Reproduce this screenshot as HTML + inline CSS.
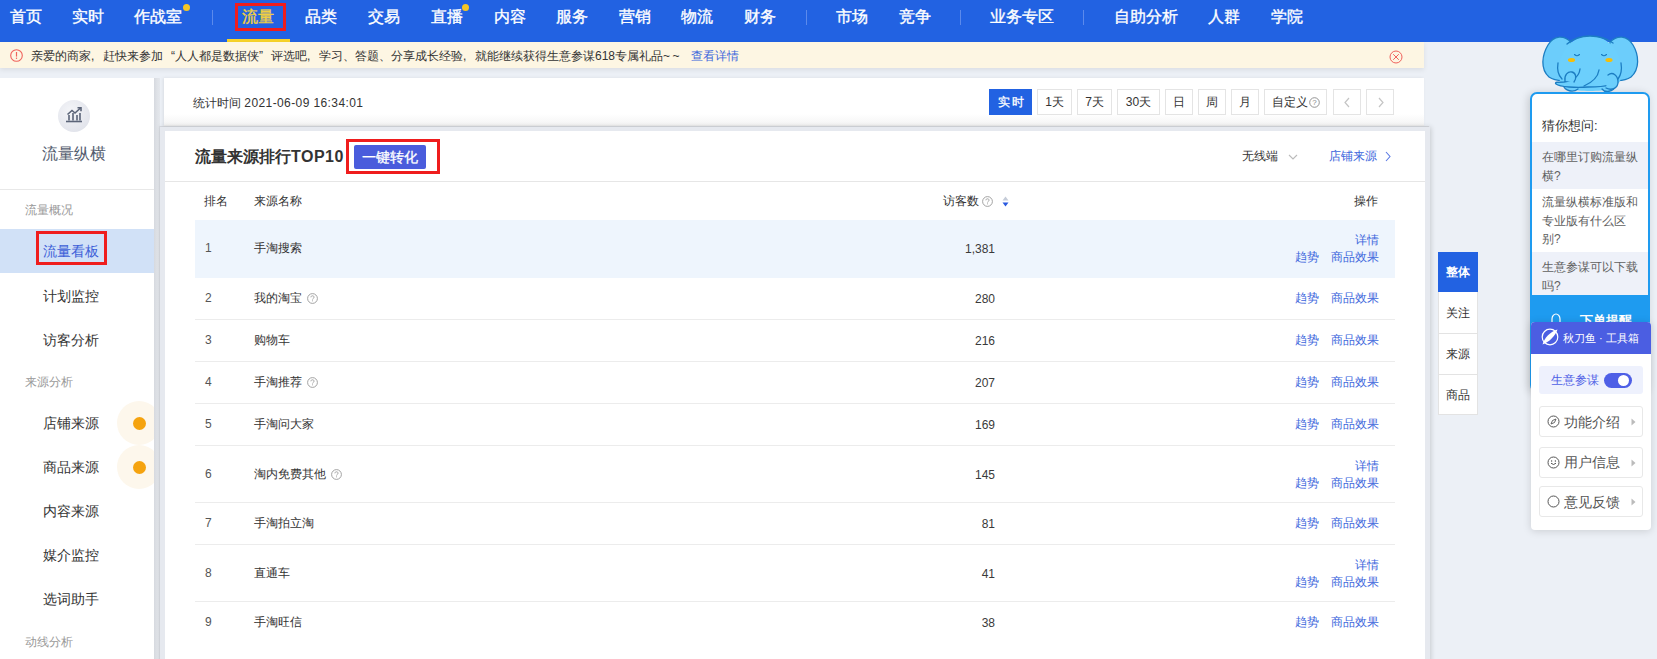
<!DOCTYPE html>
<html><head><meta charset="utf-8">
<style>
*{margin:0;padding:0;box-sizing:border-box;}
html,body{width:1657px;height:659px;overflow:hidden;}
body{background:#ecf0f6;font-family:"Liberation Sans",sans-serif;color:#333;position:relative;}
.abs{position:absolute;}
.nav{position:absolute;left:0;top:0;width:1657px;height:42px;background:#2262e2;}
.nav span{position:absolute;top:6px;font-size:16px;line-height:22px;color:#fff;white-space:nowrap;-webkit-text-stroke-width:0.35px;}
.nav .sep{position:absolute;top:10px;width:1px;height:15px;background:#5c8aec;}
.nav .dot{position:absolute;width:7px;height:7px;border-radius:50%;background:#f6c624;}
.notice{position:absolute;left:0;top:42px;width:1424px;height:26px;background:#fdf6e3;box-shadow:0 2px 5px rgba(0,0,0,0.08);font-size:12px;color:#333;}
.side{position:absolute;left:0;top:78px;width:154px;height:581px;background:#fff;}
.side .t{position:absolute;white-space:nowrap;}
.topcard{position:absolute;left:164px;top:78px;width:1260px;height:48px;background:linear-gradient(180deg,#fff 0,#fff 36px,#f4f4f4 47px,#e8e8e8 48px);box-shadow:-1px 0 3px rgba(0,0,0,0.08);}
.btn{position:absolute;top:11px;height:26px;border:1px solid #e4e4e4;background:#fff;font-size:12px;line-height:24px;text-align:center;color:#333;}
.main{position:absolute;left:160px;top:127px;width:1270px;height:560px;background:#fff;border:5px solid #e6e9ef;border-top-width:4px;box-shadow:1px 0 5px rgba(0,0,0,0.16),-1px -1px 0 #d9dce2;}
.row{position:absolute;left:32px;width:1200px;border-top:1px solid #ebebeb;}
.c{position:absolute;font-size:12px;white-space:nowrap;line-height:14px;}
.lnk{color:#3c66dc;}
</style></head><body>

<div class="nav">
  <span style="left:10px">首页</span>
  <span style="left:72px">实时</span>
  <span style="left:134px">作战室</span><i class="dot" style="left:183px;top:4px"></i>
  <i class="sep" style="left:212px"></i>
  <span style="left:242px;color:#f6d23c">流量</span>
  <span style="left:305px">品类</span>
  <span style="left:368px">交易</span>
  <span style="left:431px">直播</span><i class="dot" style="left:462px;top:4px"></i>
  <span style="left:494px">内容</span>
  <span style="left:556px">服务</span>
  <span style="left:619px">营销</span>
  <span style="left:681px">物流</span>
  <span style="left:744px">财务</span>
  <i class="sep" style="left:806px"></i>
  <span style="left:836px">市场</span>
  <span style="left:899px">竞争</span>
  <i class="sep" style="left:960px"></i>
  <span style="left:990px">业务专区</span>
  <i class="sep" style="left:1083px"></i>
  <span style="left:1114px">自助分析</span>
  <span style="left:1208px">人群</span>
  <span style="left:1271px">学院</span>
</div>


<div class="nav-hl abs" style="left:235px;top:3px;width:51px;height:28px;border:3px solid #ef1d1d;"></div>
<div class="abs" style="left:227px;top:39px;width:63px;height:3px;background:#f7d32a;"></div>

<div class="notice">
  <svg class="abs" style="left:10px;top:7px" width="13" height="13" viewBox="0 0 13 13"><circle cx="6.5" cy="6.5" r="5.8" fill="none" stroke="#f0625c" stroke-width="1.1"/><rect x="5.9" y="3" width="1.2" height="4.6" fill="#f0625c"/><rect x="5.9" y="8.6" width="1.2" height="1.3" fill="#f0625c"/></svg>
  <span class="abs" style="left:31px;top:7px;line-height:14px;white-space:nowrap">亲爱的商家<span style="display:inline-block;width:12px;text-align:left">,</span>赶快来参加<span style="display:inline-block;width:12px;text-align:right">“</span>人人都是数据侠<span style="display:inline-block;width:12px;text-align:left">”</span>评选吧<span style="display:inline-block;width:12px;text-align:left">,</span>学习、答题、分享成长经验<span style="display:inline-block;width:12px;text-align:left">,</span>就能继续获得生意参谋618专属礼品<span style="letter-spacing:2.5px">~~</span></span>
  <span class="abs lnk" style="left:691px;top:7px;line-height:14px;white-space:nowrap">查看详情</span>
  <svg class="abs" style="left:1389px;top:8px" width="14" height="14" viewBox="0 0 14 14"><circle cx="7" cy="7" r="6" fill="none" stroke="#f0625c" stroke-width="1"/><path d="M4.2 4.2L9.8 9.8M9.8 4.2L4.2 9.8" stroke="#f0625c" stroke-width="1"/></svg>
</div>

<!-- sidebar -->
<div class="side">
  <div class="abs" style="left:58px;top:22px;width:32px;height:32px;border-radius:50%;background:radial-gradient(circle at 40% 35%,#f4f5f8 0%,#e3e5ec 70%,#d6d9e2 100%);"></div>
  <svg class="abs" style="left:64px;top:27px" width="20" height="20" viewBox="0 0 20 20"><path d="M2 16.5H18" stroke="#5b6478" stroke-width="1.6"/><path d="M5 15.5V10M9 15.5V8M13 15.5V10M16 15.5V8" stroke="#5b6478" stroke-width="1.6"/><path d="M3.5 9.5L8 5.5L11 8L16.5 3" stroke="#5b6478" stroke-width="1.6" fill="none"/><path d="M13.5 2.8H17V6.3" stroke="#5b6478" stroke-width="1.6" fill="none"/></svg>
  <div class="t" style="left:42px;top:65px;font-size:16px;line-height:22px;color:#545d6f">流量纵横</div>
  <div class="abs" style="left:0;top:111px;width:154px;height:1px;background:#e8e8e8"></div>
  <div class="t" style="left:25px;top:125px;font-size:12px;line-height:14px;color:#999">流量概况</div>
  <div class="abs" style="left:0;top:151px;width:154px;height:44px;background:#d1e1f7"></div>
  <div class="t" style="left:43px;top:164px;font-size:14px;line-height:18px;color:#3d5fd8">流量看板</div>
  <div class="abs" style="left:36px;top:153px;width:71px;height:34px;border:3px solid #ef1d1d"></div>
  <div class="t" style="left:43px;top:209px;font-size:14px;line-height:18px;color:#333">计划监控</div>
  <div class="t" style="left:43px;top:253px;font-size:14px;line-height:18px;color:#333">访客分析</div>
  <div class="t" style="left:25px;top:297px;font-size:12px;line-height:14px;color:#999">来源分析</div>
  <div class="abs" style="left:117px;top:323px;width:44px;height:44px;border-radius:50%;background:#fdf7ec"></div>
  <div class="abs" style="left:117px;top:367px;width:44px;height:44px;border-radius:50%;background:#fdf7ec"></div>
  <div class="abs" style="left:133px;top:339px;width:13px;height:13px;border-radius:50%;background:#f5a30f"></div>
  <div class="abs" style="left:133px;top:383px;width:13px;height:13px;border-radius:50%;background:#f5a30f"></div>
  <div class="t" style="left:43px;top:336px;font-size:14px;line-height:18px;color:#333">店铺来源</div>
  <div class="t" style="left:43px;top:380px;font-size:14px;line-height:18px;color:#333">商品来源</div>
  <div class="t" style="left:43px;top:424px;font-size:14px;line-height:18px;color:#333">内容来源</div>
  <div class="t" style="left:43px;top:468px;font-size:14px;line-height:18px;color:#333">媒介监控</div>
  <div class="t" style="left:43px;top:512px;font-size:14px;line-height:18px;color:#333">选词助手</div>
  <div class="t" style="left:25px;top:557px;font-size:12px;line-height:14px;color:#999">动线分析</div>
</div>
<div class="abs" style="left:154px;top:78px;width:6px;height:581px;background:linear-gradient(90deg,#d6d9df,#dfe2e7 50%,#e4e7ec)"></div>

<!-- top card -->
<div class="topcard">
  <div class="c" style="left:29px;top:18px;color:#333">统计时间 <span style="letter-spacing:0.4px">2021-06-09 16:34:01</span></div>
  <div class="btn" style="left:825px;width:43px;background:#2262e2;border-color:#2262e2;color:#fff;letter-spacing:2px;text-indent:2px;-webkit-text-stroke-width:0.3px">实时</div>
  <div class="btn" style="left:873px;width:35px">1天</div>
  <div class="btn" style="left:913px;width:35px">7天</div>
  <div class="btn" style="left:953px;width:43px">30天</div>
  <div class="btn" style="left:1001px;width:28px">日</div>
  <div class="btn" style="left:1034px;width:28px">周</div>
  <div class="btn" style="left:1067px;width:28px">月</div>
  <div class="btn" style="left:1100px;width:63px;text-align:left;padding-left:7px">自定义<svg style="position:absolute;left:44px;top:7px" width="11" height="11" viewBox="0 0 11 11"><circle cx="5.5" cy="5.5" r="4.8" fill="none" stroke="#888" stroke-width="0.9"/><text x="5.5" y="8.4" font-size="8" text-anchor="middle" fill="#888" font-family="Liberation Sans">?</text></svg></div>
  <div class="btn" style="left:1169px;width:28px"><svg style="position:absolute;left:9px;top:7px" width="8" height="11" viewBox="0 0 8 11"><path d="M6 1L2 5.5L6 10" stroke="#c4c4c4" stroke-width="1.2" fill="none"/></svg></div>
  <div class="btn" style="left:1202px;width:28px"><svg style="position:absolute;left:10px;top:7px" width="8" height="11" viewBox="0 0 8 11"><path d="M2 1L6 5.5L2 10" stroke="#c4c4c4" stroke-width="1.2" fill="none"/></svg></div>
</div>
<!-- main card -->
<div class="main">
<div class="abs" style="left:30px;top:15px;font-size:16px;line-height:22px;font-weight:bold;color:#333;white-space:nowrap">流量来源排行<span style="letter-spacing:0.5px">TOP10</span></div>
<div class="abs" style="left:189px;top:14px;width:72px;height:24px;background:#4a5cdc;border-radius:2px;color:#fff;font-size:14px;line-height:24px;text-align:center;-webkit-text-stroke-width:0.3px">一键转化</div>
<div class="abs" style="left:181px;top:8px;width:94px;height:35px;border:3px solid #ef1d1d"></div>
<div class="c" style="left:1077px;top:18px;color:#333">无线端</div>
<svg class="abs" style="left:1123px;top:22px" width="10" height="8" viewBox="0 0 10 8"><path d="M1 2L5 6L9 2" stroke="#bbb" stroke-width="1.1" fill="none"/></svg>
<div class="c lnk" style="left:1164px;top:18px">店铺来源</div>
<svg class="abs" style="left:1219px;top:20px" width="8" height="11" viewBox="0 0 8 11"><path d="M2 1L6 5.5L2 10" stroke="#5a7ae4" stroke-width="1.1" fill="none"/></svg>
<div class="abs" style="left:0;top:50px;width:1260px;height:1px;background:#e6e6e6"></div>
<div class="c" style="left:39px;top:63px;color:#333">排名</div>
<div class="c" style="left:89px;top:63px;color:#333">来源名称</div>
<div class="c" style="left:778px;top:63px;color:#333">访客数</div>
<svg class="abs" style="left:817px;top:65px" width="11" height="11" viewBox="0 0 11 11"><circle cx="5.5" cy="5.5" r="4.9" fill="none" stroke="#999" stroke-width="0.9"/><path d="M3.9 4.3C3.9 3.3 4.6 2.8 5.5 2.8C6.4 2.8 7.1 3.4 7.1 4.2C7.1 5.2 5.6 5.3 5.6 6.5" fill="none" stroke="#999" stroke-width="0.9"/><rect x="5.1" y="7.4" width="0.9" height="0.9" fill="#999"/></svg>
<svg class="abs" style="left:837px;top:65px" width="7" height="11" viewBox="0 0 7 11"><path d="M0.5 4.5L3.5 0.5L6.5 4.5Z" fill="#c5ccd8"/><path d="M0.5 6.5L3.5 10.5L6.5 6.5Z" fill="#2a5ae0"/></svg>
<div class="c" style="left:1189px;top:63px;color:#333">操作</div>
<div class="abs" style="left:30px;top:89px;width:1200px;height:58px;background:#eef5fd"></div>
<div class="c" style="left:40px;top:110px;color:#555">1</div>
<div class="c" style="left:89px;top:110px;color:#333">手淘搜索</div>
<div class="c" style="right:430px;top:111px;color:#3a3a3a">1,381</div>
<div class="c lnk" style="left:1190px;top:102px">详情</div>
<div class="c lnk" style="left:1130px;top:119px">趋势</div>
<div class="c lnk" style="left:1166px;top:119px">商品效果</div>
<div class="abs" style="left:30px;top:188px;width:1200px;height:1px;background:#ececec"></div>
<div class="c" style="left:40px;top:160px;color:#555">2</div>
<div class="c" style="left:89px;top:160px;color:#333">我的淘宝</div>
<svg class="abs" style="left:142px;top:162px" width="11" height="11" viewBox="0 0 11 11"><circle cx="5.5" cy="5.5" r="4.9" fill="none" stroke="#999" stroke-width="0.9"/><path d="M3.9 4.3C3.9 3.3 4.6 2.8 5.5 2.8C6.4 2.8 7.1 3.4 7.1 4.2C7.1 5.2 5.6 5.3 5.6 6.5" fill="none" stroke="#999" stroke-width="0.9"/><rect x="5.1" y="7.4" width="0.9" height="0.9" fill="#999"/></svg>
<div class="c" style="right:430px;top:161px;color:#3a3a3a">280</div>
<div class="c lnk" style="left:1130px;top:160px">趋势</div>
<div class="c lnk" style="left:1166px;top:160px">商品效果</div>
<div class="abs" style="left:30px;top:230px;width:1200px;height:1px;background:#ececec"></div>
<div class="c" style="left:40px;top:202px;color:#555">3</div>
<div class="c" style="left:89px;top:202px;color:#333">购物车</div>
<div class="c" style="right:430px;top:203px;color:#3a3a3a">216</div>
<div class="c lnk" style="left:1130px;top:202px">趋势</div>
<div class="c lnk" style="left:1166px;top:202px">商品效果</div>
<div class="abs" style="left:30px;top:272px;width:1200px;height:1px;background:#ececec"></div>
<div class="c" style="left:40px;top:244px;color:#555">4</div>
<div class="c" style="left:89px;top:244px;color:#333">手淘推荐</div>
<svg class="abs" style="left:142px;top:246px" width="11" height="11" viewBox="0 0 11 11"><circle cx="5.5" cy="5.5" r="4.9" fill="none" stroke="#999" stroke-width="0.9"/><path d="M3.9 4.3C3.9 3.3 4.6 2.8 5.5 2.8C6.4 2.8 7.1 3.4 7.1 4.2C7.1 5.2 5.6 5.3 5.6 6.5" fill="none" stroke="#999" stroke-width="0.9"/><rect x="5.1" y="7.4" width="0.9" height="0.9" fill="#999"/></svg>
<div class="c" style="right:430px;top:245px;color:#3a3a3a">207</div>
<div class="c lnk" style="left:1130px;top:244px">趋势</div>
<div class="c lnk" style="left:1166px;top:244px">商品效果</div>
<div class="abs" style="left:30px;top:314px;width:1200px;height:1px;background:#ececec"></div>
<div class="c" style="left:40px;top:286px;color:#555">5</div>
<div class="c" style="left:89px;top:286px;color:#333">手淘问大家</div>
<div class="c" style="right:430px;top:287px;color:#3a3a3a">169</div>
<div class="c lnk" style="left:1130px;top:286px">趋势</div>
<div class="c lnk" style="left:1166px;top:286px">商品效果</div>
<div class="abs" style="left:30px;top:371px;width:1200px;height:1px;background:#ececec"></div>
<div class="c" style="left:40px;top:336px;color:#555">6</div>
<div class="c" style="left:89px;top:336px;color:#333">淘内免费其他</div>
<svg class="abs" style="left:166px;top:338px" width="11" height="11" viewBox="0 0 11 11"><circle cx="5.5" cy="5.5" r="4.9" fill="none" stroke="#999" stroke-width="0.9"/><path d="M3.9 4.3C3.9 3.3 4.6 2.8 5.5 2.8C6.4 2.8 7.1 3.4 7.1 4.2C7.1 5.2 5.6 5.3 5.6 6.5" fill="none" stroke="#999" stroke-width="0.9"/><rect x="5.1" y="7.4" width="0.9" height="0.9" fill="#999"/></svg>
<div class="c" style="right:430px;top:337px;color:#3a3a3a">145</div>
<div class="c lnk" style="left:1190px;top:328px">详情</div>
<div class="c lnk" style="left:1130px;top:345px">趋势</div>
<div class="c lnk" style="left:1166px;top:345px">商品效果</div>
<div class="abs" style="left:30px;top:413px;width:1200px;height:1px;background:#ececec"></div>
<div class="c" style="left:40px;top:385px;color:#555">7</div>
<div class="c" style="left:89px;top:385px;color:#333">手淘拍立淘</div>
<div class="c" style="right:430px;top:386px;color:#3a3a3a">81</div>
<div class="c lnk" style="left:1130px;top:385px">趋势</div>
<div class="c lnk" style="left:1166px;top:385px">商品效果</div>
<div class="abs" style="left:30px;top:470px;width:1200px;height:1px;background:#ececec"></div>
<div class="c" style="left:40px;top:435px;color:#555">8</div>
<div class="c" style="left:89px;top:435px;color:#333">直通车</div>
<div class="c" style="right:430px;top:436px;color:#3a3a3a">41</div>
<div class="c lnk" style="left:1190px;top:427px">详情</div>
<div class="c lnk" style="left:1130px;top:444px">趋势</div>
<div class="c lnk" style="left:1166px;top:444px">商品效果</div>
<div class="c" style="left:40px;top:484px;color:#555">9</div>
<div class="c" style="left:89px;top:484px;color:#333">手淘旺信</div>
<div class="c" style="right:430px;top:485px;color:#3a3a3a">38</div>
<div class="c lnk" style="left:1130px;top:484px">趋势</div>
<div class="c lnk" style="left:1166px;top:484px">商品效果</div>
</div>
<!-- side tabs -->
<div class="abs" style="left:1438px;top:252px;width:40px;height:163px;background:#fff;border:1px solid #e3e3e3;"></div>
<div class="abs" style="left:1438px;top:252px;width:40px;height:40px;background:#2262e2;color:#fff;font-size:12px;line-height:40px;text-align:center;font-weight:bold">整体</div>
<div class="abs" style="left:1438px;top:333px;width:40px;height:1px;background:#e3e3e3"></div>
<div class="abs" style="left:1438px;top:374px;width:40px;height:1px;background:#e3e3e3"></div>
<div class="abs" style="left:1438px;top:293px;width:40px;height:40px;color:#333;font-size:12px;line-height:40px;text-align:center">关注</div>
<div class="abs" style="left:1438px;top:334px;width:40px;height:40px;color:#333;font-size:12px;line-height:40px;text-align:center">来源</div>
<div class="abs" style="left:1438px;top:375px;width:40px;height:40px;color:#333;font-size:12px;line-height:40px;text-align:center">商品</div>

<!-- guess panel -->
<div class="abs" style="left:1530px;top:92px;width:120px;height:300px;border:2px solid #1e9bf0;border-radius:7px;background:#fff;overflow:hidden;box-shadow:-2px 1px 8px rgba(0,0,0,0.16)">
  <div class="abs" style="left:10px;top:23px;font-size:13px;line-height:18px;color:#333;white-space:nowrap">猜你想问:</div>
  <div class="abs" style="left:0;top:48px;width:117px;height:47px;background:#eef1f9"></div>
  <div class="abs" style="left:10px;top:54px;width:104px;font-size:12px;line-height:18.5px;color:#606060">在哪里订购流量纵<br>横?</div>
  <div class="abs" style="left:10px;top:99px;width:104px;font-size:12px;line-height:18.5px;color:#606060">流量纵横标准版和<br>专业版有什么区<br>别?</div>
  <div class="abs" style="left:0;top:158px;width:117px;height:43px;background:#eef1f9"></div>
  <div class="abs" style="left:10px;top:164px;width:104px;font-size:12px;line-height:18.5px;color:#606060">生意参谋可以下载<br>吗?</div>
  <div class="abs" style="left:0;top:201px;width:117px;height:100px;background:#1e9bf0"></div>
  <div class="abs" style="left:48px;top:218px;font-size:13px;line-height:18px;color:#fff;font-weight:bold;white-space:nowrap">下单提醒</div>
  <svg class="abs" style="left:18px;top:218px" width="12" height="16" viewBox="0 0 12 16"><path d="M2 14V7C2 4 4 2 6 2C8 2 10 4 10 7V14" fill="none" stroke="#fff" stroke-width="1.2"/></svg>
</div>

<!-- elephant -->
<svg class="abs" style="left:1536px;top:32px" width="110" height="66" viewBox="0 0 110 66">
  <g stroke="#1c7dc2" stroke-width="1.3" stroke-linejoin="round" stroke-linecap="round">
  <path d="M35 10C28 3 18 3 12 13C6 23 4 37 13 45C20 50 30 49 40 47Z" fill="#6ccdfb"/>
  <path d="M74 10C81 3 91 3 97 13C103 23 104 37 95 45C88 50 78 49 68 47Z" fill="#6ccdfb"/>
  <path d="M23 46C20 22 34 4 54 4C74 4 88 22 85 46C83 56 70 59 54 59C38 59 25 56 23 46Z" fill="#6ccffc" stroke="none"/>
  <path d="M31 12C38 6 46 4 54 4C62 4 70 6 77 11" fill="none"/>
  <path d="M22 31C21 37 22 43 26 47" fill="none"/>
  <path d="M85 31C86 37 85 43 82 47" fill="none"/>
  <path d="M27 53C29 59 37 61 42 57" fill="#6ccdfb"/>
  <path d="M66 57C69 61 77 60 80 54" fill="#6ccdfb"/>
  <path d="M44 37C43 45 36 49 28 50C22 50 18 50 20 52C24 55 40 56 52 55C62 55 70 54 73 53" fill="#6ccffc"/>
  <path d="M29 49C28 43 32 39 36 40C40 41 41 46 38 50" fill="#6ccffc"/>
  <path d="M72 43C77 39 82 44 82 50C82 56 76 59 70 56" fill="#6ccffc"/>
  <path d="M63 38C62 45 57 50 48 54" fill="none"/>
  <path d="M38.5 22.5Q41 25 43.5 22.5M65.5 22.5Q68 25 70.5 22.5" fill="none" stroke-width="1.1"/>
  </g>
  <ellipse cx="35.5" cy="28" rx="3.6" ry="2.1" fill="#f5be0a"/>
  <ellipse cx="73" cy="28" rx="3.6" ry="2.1" fill="#f5be0a"/>
</svg>

<!-- toolbox -->
<div class="abs" style="left:1531px;top:322px;width:120px;height:208px;background:#fff;border-radius:4px;box-shadow:0 1px 8px rgba(0,0,0,0.15);overflow:hidden">
  <div class="abs" style="left:0;top:0;width:120px;height:32px;background:#4b5ee2"></div>
  <svg class="abs" style="left:9px;top:5px" width="20" height="20" viewBox="0 0 20 20"><circle cx="10" cy="10" r="7.8" fill="none" stroke="#fff" stroke-width="1.2"/><path d="M2.5 17.5C4.5 11 9.5 5 17.5 2.5C15 9 10 14.5 2.5 17.5Z" fill="#fff"/></svg>
  <div class="abs" style="left:32px;top:8px;font-size:11px;line-height:16px;color:#fff;white-space:nowrap">秋刀鱼 · 工具箱</div>
  <div class="abs" style="left:8px;top:44px;width:104px;height:28px;background:#eef1fd;border-radius:3px"></div>
  <div class="abs" style="left:20px;top:51px;font-size:12px;line-height:14px;color:#4e5fe6;white-space:nowrap">生意参谋</div>
  <div class="abs" style="left:73px;top:51px;width:28px;height:15px;border-radius:8px;background:#4e5fe6"></div>
  <div class="abs" style="left:87px;top:53px;width:11px;height:11px;border-radius:50%;background:#fff"></div>
  <div class="abs" style="left:8px;top:84px;width:104px;height:31px;border:1px solid #e8e8e8;border-radius:3px"></div>
  <div class="abs" style="left:8px;top:125px;width:104px;height:31px;border:1px solid #e8e8e8;border-radius:3px"></div>
  <div class="abs" style="left:8px;top:164px;width:104px;height:31px;border:1px solid #e8e8e8;border-radius:3px"></div>
  <svg class="abs" style="left:16px;top:93px" width="13" height="13" viewBox="0 0 13 13"><circle cx="6.5" cy="6.5" r="5.5" fill="none" stroke="#555" stroke-width="1"/><path d="M9 4L5.5 5.5L4 9L7.5 7.5Z" fill="none" stroke="#555" stroke-width="0.9"/></svg>
  <svg class="abs" style="left:16px;top:134px" width="13" height="13" viewBox="0 0 13 13"><circle cx="6.5" cy="6.5" r="5.5" fill="none" stroke="#555" stroke-width="1"/><path d="M4 7.2Q6.5 9.8 9 7.2" fill="none" stroke="#555" stroke-width="1"/><circle cx="4.6" cy="5" r="0.7" fill="#555"/><circle cx="8.4" cy="5" r="0.7" fill="#555"/></svg>
  <svg class="abs" style="left:16px;top:173px" width="13" height="13" viewBox="0 0 13 13"><circle cx="6.5" cy="6.5" r="5.5" fill="none" stroke="#555" stroke-width="1"/></svg>
  <div class="abs" style="left:33px;top:92px;font-size:14px;line-height:17px;color:#555;white-space:nowrap">功能介绍</div>
  <div class="abs" style="left:33px;top:132px;font-size:14px;line-height:17px;color:#555;white-space:nowrap">用户信息</div>
  <div class="abs" style="left:33px;top:172px;font-size:14px;line-height:17px;color:#555;white-space:nowrap">意见反馈</div>
  <svg class="abs" style="left:100px;top:96px" width="5" height="8" viewBox="0 0 5 8"><path d="M0.5 0.5L4.5 4L0.5 7.5Z" fill="#bbb"/></svg>
  <svg class="abs" style="left:100px;top:137px" width="5" height="8" viewBox="0 0 5 8"><path d="M0.5 0.5L4.5 4L0.5 7.5Z" fill="#bbb"/></svg>
  <svg class="abs" style="left:100px;top:176px" width="5" height="8" viewBox="0 0 5 8"><path d="M0.5 0.5L4.5 4L0.5 7.5Z" fill="#bbb"/></svg>
</div>
</body></html>
